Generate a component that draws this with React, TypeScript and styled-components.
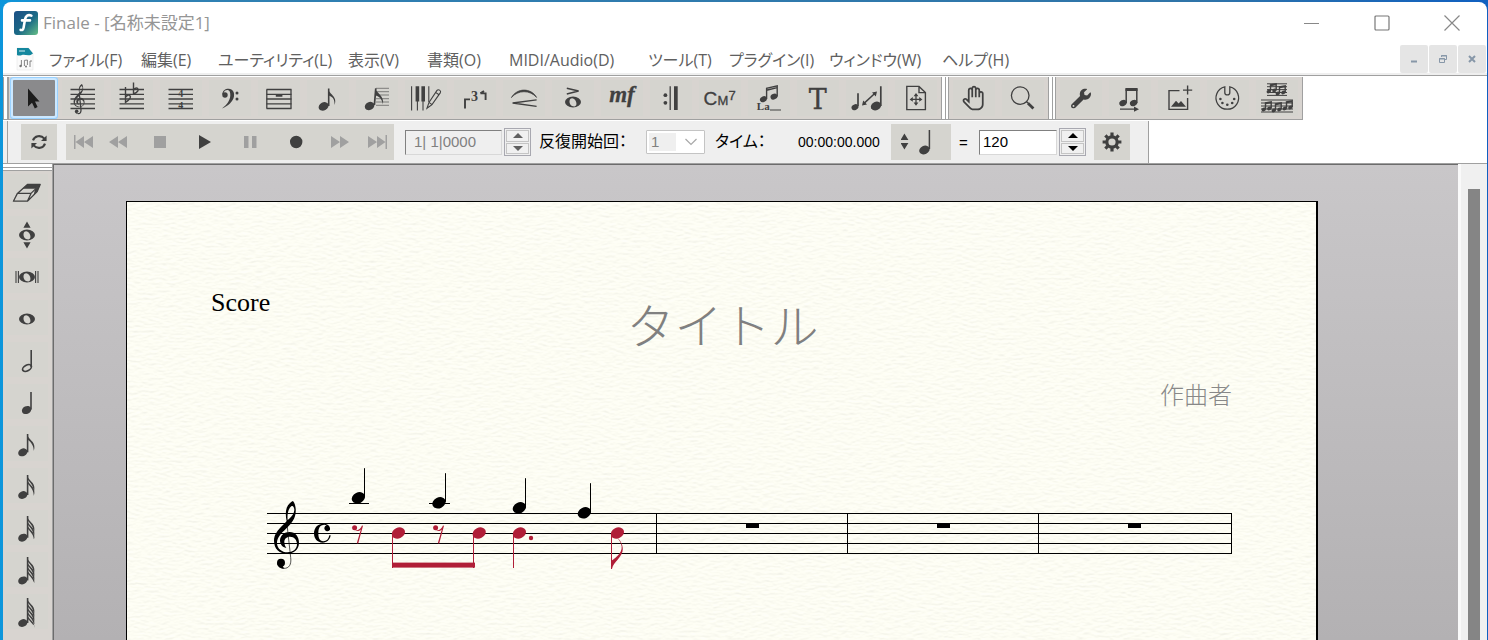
import React from "react";
import styled, { createGlobalStyle } from "styled-components";
import { LiaHandPaper } from "react-icons/lia";
import { FaWrench } from "react-icons/fa";

const ink = "#404040";
const line = "#a0a0a0";
const face = "#efefef";
const tile = "#d5d4cf";
const strip = "#d8d4d0";
const red = "#b01e37";

const ui = `"Open Sans", "Noto Sans CJK JP", sans-serif`;
const gothic = `"Liberation Sans", "Noto Sans CJK JP", sans-serif`;
const mincho = `"Liberation Serif", "Noto Sans CJK JP", serif`;

const Global = createGlobalStyle`
  * { box-sizing: border-box; }
  body {
    margin: 0;
    font-family: ${ui};
    background: linear-gradient(to right, #0c96dc 0, #2f82b4 120px, #2f74a8 80%, #1060c0 100%);
  }
  button, input, select { font: inherit; margin: 0; }
`;

/* ---------- window frame ---------- */

const Window = styled.div`
  display: flex;
  flex-direction: column;
  min-height: calc(100vh - 2px);
  margin: 0 1px 0 3px;
  border-radius: 8px 8px 0 0;
  background: #fff;
  overflow: hidden;
`;

const Desktop = styled.div`
  padding-top: 2px;
`;

const TitleBar = styled.header`
  display: flex;
  align-items: center;
  height: 43px;
  padding: 0 0 2px 11px;
`;

const Title = styled.h1`
  flex: 1;
  margin: 0 0 0 5px;
  font-size: 17px;
  line-height: 24px;
  font-weight: 400;
  color: #959595;
`;

const CaptionButton = styled.button`
  display: grid;
  place-items: center;
  width: 70px;
  height: 40px;
  padding: 0;
  border: 0;
  background: none;
`;

const MenuBar = styled.nav`
  display: flex;
  align-items: center;
  height: 30px;
  padding-left: 13px;
  border-bottom: 2px solid ${face};
`;

const MenuItem = styled.button<{ $w: number }>`
  flex: none;
  width: ${(p) => p.$w}px;
  padding: 2px 0 0;
  border: 0;
  background: none;
  text-align: left;
  white-space: nowrap;
  font-size: 16px;
  line-height: 24px;
  font-feature-settings: "palt";
  color: #606060;
`;

const MenuList = styled.div`
  display: flex;
  flex: 1;
  padding-left: 15px;
`;

const ChildButtons = styled.div`
  display: flex;
  gap: 1px;
  padding-right: 1px;
`;

const ChildButton = styled.button`
  display: grid;
  place-items: center;
  width: 28px;
  height: 28px;
  padding: 0;
  border: 0;
  border-radius: 2px;
  background: #e5e5e5;
`;

/* ---------- tool strips ---------- */

const ToolStrip = styled.div`
  display: flex;
  height: 46px;
  padding-top: 1px;
  border-top: 1px solid ${line};
`;

const Section = styled.div`
  display: flex;
  height: 43px;
  border-bottom: 1px solid ${line};
  background: ${strip};

  &:last-child {
    border-right: 1px solid ${line};
  }
`;

const Grip = styled.span<{ $narrow?: boolean }>`
  width: ${(p) => (p.$narrow ? 6 : 8)}px;
  border: solid ${line};
  border-width: 0 1px;
  background: linear-gradient(to right, #fff 3px, ${line} 3px, ${line} 4px, #fff 4px);
`;

const Tools = styled.div`
  display: flex;
  align-items: center;
  gap: 7px;
  padding: 0 4px;
`;

const ToolButton = styled.button<{ $on?: boolean }>`
  display: grid;
  place-items: center;
  width: 42px;
  height: 36px;
  padding: 0;
  border: 0;
  color: ${ink};
  background: ${(p) => (p.$on ? "#8a8a8c" : tile)};
  box-shadow: ${(p) => (p.$on ? "0 0 0 2px #cce8ff, 0 0 0 3px #99d1ff" : "none")};
  border-radius: ${(p) => (p.$on ? 1 : 0)}px;
`;

const Transport = styled.form`
  display: flex;
  align-self: flex-start;
  align-items: center;
  height: 42px;
  padding: 0 18px 0 13px;
  margin-left: 4px;
  border: solid ${line};
  border-width: 0 1px;
  background: ${face};
  box-shadow: -4px 0 0 ${face};
  font-family: ${gothic};
  font-size: 15px;
  color: #000;
`;

const TransportKey = styled.button<{ $w?: number; $dim?: boolean }>`
  display: grid;
  place-items: center;
  width: ${(p) => p.$w ?? 36}px;
  height: 36px;
  padding: 0;
  border: 0;
  background: ${tile};
  color: ${(p) => (p.$dim ? "#a0a0a0" : ink)};
`;

const Deck = styled.div`
  display: flex;
  margin: 0 11px 0 9px;
`;

const NumberBox = styled.input<{ $w: number; $dim?: boolean }>`
  width: ${(p) => p.$w}px;
  height: 25px;
  padding: 0 0 2px ${(p) => (p.$dim ? 8 : 3)}px;
  border: 1px solid;
  border-color: #808080 #d8d8d8 #d8d8d8 #808080;
  background: ${(p) => (p.$dim ? face : "#fff")};
  color: ${(p) => (p.$dim ? "#808080" : "#000")};
  outline: 0;
`;

const Spin = styled.span`
  display: flex;
  flex-direction: column;
  gap: 1px;
  width: 27px;
  height: 28px;
  margin: 0 8px 0 2px;
  padding: 1px;
  border: 1px solid #a8a8b0;
`;

const SpinKey = styled.button<{ $down?: boolean; $dim?: boolean }>`
  display: grid;
  place-items: center;
  flex: 1;
  padding: 0;
  border: 1px solid #c4c4c4;
  background: #f0f0f0;

  &::before {
    content: "";
    border: 5px solid transparent;
    border-width: ${(p) => (p.$down ? "5px 5px 0" : "0 5px 5px")};
    border-${(p) => (p.$down ? "top" : "bottom")}-color: ${(p) => (p.$dim ? "#606060" : "#000")};
  }
`;

const FieldLabel = styled.label<{ $w: number }>`
  width: ${(p) => p.$w}px;
  font-size: 16px;
  line-height: 24px;
  white-space: nowrap;
  font-feature-settings: "palt";
`;

const PassSelect = styled.select`
  width: 59px;
  height: 24px;
  padding: 0 0 2px 4px;
  appearance: none;
  border: 1px solid #c4c4c4;
  border-radius: 1px;
  color: #808080;
  background: linear-gradient(${face}, ${face}) 2px 2px / 27px 18px no-repeat, #fff;
`;

const PassArrow = styled.svg`
  pointer-events: none;
  margin: 0 12px 0 -26px;
`;

const Clock = styled.output`
  width: 93px;
  font-size: 14px;
`;

const Equals = styled.span`
  width: 28px;
  padding-left: 8px;
`;

/* ---------- work area ---------- */

const Work = styled.main`
  display: flex;
  flex: 1;
  border-top: 1px solid ${line};
`;

const Palette = styled.aside`
  display: flex;
  flex-direction: column;
  width: 50px;
  border-right: 1px solid ${line};
  background: ${strip};
`;

const PaletteGrip = styled.span`
  height: 7px;
  border: solid ${line};
  border-width: 0 0 1px;
  background: linear-gradient(#fff 3px, ${line} 3px, ${line} 4px, #fff 4px);
`;

const PaletteTools = styled.div`
  display: flex;
  flex-direction: column;
  gap: 7px;
  padding: 3px 0 0 3px;
`;

const NoteButton = styled(ToolButton)`
  height: 35px;
`;

const Canvas = styled.section`
  display: flex;
  flex: 1;
  min-width: 0;
  padding: 36px 140px 0 72px;
  border-top: 1px solid #6c6c6c;
  border-left: 1px solid #6c6c6c;
  background: linear-gradient(#c9c7c9, #b3b1b3);
`;

const Sheet = styled.article`
  display: grid;
  flex: 1;
  min-width: 0;
  border: solid #000;
  border-width: 1px 2px 0 1px;
  background: #fefef5;
  font-family: ${mincho};

  > * {
    grid-area: 1 / 1;
    min-width: 0;
  }
`;

const Paper = styled.svg`
  width: 100%;
  height: 100%;
`;

const SheetBody = styled.div`
  display: flex;
  flex-direction: column;
  z-index: 1;
  padding: 86px 84px 0;
`;

const PartName = styled.p`
  margin: 0;
  font-size: 26px;
  line-height: 30px;
  color: #000;
`;

const PieceTitle = styled.h2`
  margin: -18px 0 0 2px;
  text-align: center;
  font-size: 48px;
  line-height: 56px;
  font-weight: 300;
  color: #808080;
`;

const Composer = styled.p`
  margin: 23px 0 0;
  text-align: right;
  font-size: 24px;
  line-height: 34px;
  font-weight: 300;
  color: #888;
`;

const Staff = styled.svg`
  align-self: flex-end;
  flex: none;
  margin-top: 47px;
`;

const ScrollTrack = styled.div`
  display: flex;
  justify-content: center;
  width: 29px;
  padding: 25px 3px 0 3px;
  border-left: 3px solid #fafafa;
  background: #f0f0f0;
`;

const ScrollThumb = styled.span`
  width: 12px;
  background: #858585;
`;

/* ---------- music drawings ---------- */

const Clef = ({ transform, thin = 3 }: { transform: string; thin?: number }) => (
  <g transform={transform} fill="currentColor">
    <path
      fillRule="evenodd"
      d="M129 153C137 162 139 180 136 194C132 212 120 224 108 236C94 249 81 262 81 279C81 296 96 307 112 307C128 307 141 298 141 283C141 270 133 260 120 260C109 260 103 267 103 276C103 284 106 289 109 294C96 292 90 282 90 271C91 256 103 246 119 246C136 246 147 260 147 278C147 298 132 311 110 311C88 311 72 296 72 272C72 254 84 240 98 226L110 214C106 196 106 178 114 166C119 159 125 154 129 153ZM113 210C124 202 133 192 133 178C132 170 128 166 124 169C115 176 111 192 113 210Z"
    />
    <path d="M110 214L122 322C125 344 117 356 101 355" fill="none" stroke="currentColor" strokeWidth={thin} />
    <circle cx="93" cy="338" r="12" />
    <path d="M81 338C82 350 91 357 103 356L98 348Z" />
  </g>
);

const Head = ({ x, y, r = 5 }: { x: number; y: number; r?: number }) => (
  <ellipse cx={x} cy={y} rx={r} ry={r * 0.78} transform={`rotate(-26 ${x} ${y})`} fill="currentColor" />
);

const Lines = ({ x1, x2, ys, w = 1.3 }: { x1: number; x2: number; ys: number[]; w?: number }) => (
  <path d={ys.map((y) => `M${x1} ${y}H${x2}`).join("")} stroke="currentColor" strokeWidth={w} fill="none" />
);

const WholeNote = ({ x, y }: { x: number; y: number }) => (
  <path
    fillRule="evenodd"
    fill="currentColor"
    d={`M${x - 8} ${y}a8 5.4 0 1 0 16 0a8 5.4 0 1 0 -16 0ZM${x - 3.4} ${y - 1.6}c.8 -3.4 4.6 -2.6 6 .4c1.4 3 1.2 5.4 -1.4 5.6c-3 0 -5.2 -3 -4.6 -6Z`}
  />
);

const FlaggedNote = ({ flags }: { flags: number }) => {
  const top = Math.max(3.6, 9 - flags);
  const base = Math.min(29, 25.6 + flags * 0.7);
  return (
    <>
      <Head x={16.8} y={base} r={4.8} />
      <path d={`M21.6 ${top}V${base}`} stroke="currentColor" strokeWidth="1.6" />
      {Array.from({ length: flags }, (_, i) => {
        const y = top + i * 4;
        return (
          <path
            key={i}
            fill="currentColor"
            d={`M21 ${y}C22.5 ${y + 6} 29 ${y + 7} 28.4 ${y + 14}L27.8 ${Math.min(y + 17, base + 1.5)}C27.6 ${y + 12} 26 ${y + 9} 21 ${y + 6 - Math.min(2, flags)}Z`}
          />
        );
      })}
    </>
  );
};

const Gear = () => (
  <svg width="20" height="20" viewBox="-10 -10 20 20" fill="none" stroke="currentColor" aria-hidden="true">
    <circle r="5.2" strokeWidth="3.2" />
    {[0, 45, 90, 135, 180, 225, 270, 315].map((a) => (
      <path key={a} d="M0 -6V-9.4" strokeWidth="3.2" transform={`rotate(${a})`} />
    ))}
  </svg>
);

const Icon = ({ children, h = 36 }: { children: React.ReactNode; h?: number }) => (
  <svg width="42" height={h} viewBox={`0 0 42 ${h}`} fill="none" aria-hidden="true">
    {children}
  </svg>
);

const five = [9.5, 14.3, 19, 23.8, 28.5];
const stroke = { stroke: "currentColor", fill: "none" } as const;
const serifBold = { fontFamily: "Liberation Serif", fontWeight: 700, fill: "currentColor" } as const;

const mainTools: [string, React.ReactNode][] = [
  ["選択ツール", <path d="M15 8.5V26.5L19 22.8L21.8 28.4L24.6 27L22 21.5H26.5Z" fill="#1c1c1c" />],
  ["五線ツール", <><Lines x1={8.5} x2={33} ys={five} /><Clef transform="translate(1 -18.5) scale(.147)" thin={9} /></>],
  ["調号ツール", <><Lines x1={8.5} x2={33} ys={five} /><path d="M14.5 7V22.4C19 19.4 20.4 17 18.8 15.4C17.4 14.4 15.6 15.6 14.5 17.2M22.5 2.4V14C27 12 28 10 26.6 8.4C25 7.4 23.6 8.6 22.5 10" {...stroke} strokeWidth="1.4" /></>],
  ["拍子ツール", <><Lines x1={8.5} x2={33} ys={five} /><text x="20.7" y="17" fontSize="10" textAnchor="middle" {...serifBold}>4</text><text x="20.7" y="29" fontSize="10" textAnchor="middle" {...serifBold}>4</text></>],
  ["音部記号ツール", <><circle cx="16" cy="15" r="2.7" fill="currentColor" /><path d="M13.3 15C13 10.5 17 8.6 19.6 8.8C24 9.2 25.6 12.4 25 16.2C24.2 21.6 19 26 13 28.4C17.6 25 21 21 21.3 15.6C21.4 12 20.6 10.2 18.6 10.1C16.6 10 14.8 11.2 14.6 13.4Z" fill="currentColor" /><circle cx="28" cy="13" r="1.5" fill="currentColor" /><circle cx="28" cy="19" r="1.5" fill="currentColor" /></>],
  ["小節ツール", <><Lines x1={8.5} x2={33.5} ys={five} /><path d="M8.8 9.5V28.5M33 9.5V28.5" {...stroke} strokeWidth="1.3" /><path d="M17.8 14H24.4V16.8H17.8Z" fill="currentColor" /></>],
  ["高速ステップ入力ツール", <><Head x={16.6} y={26.4} r={5.2} /><path d="M21.7 8.6V26" {...stroke} strokeWidth="1.6" /><path d="M21 8.5C22 14.5 31 16 27.6 25C27.6 19 26 16.6 21.4 15.4Z" fill="currentColor" /></>],
  ["ステップ入力ツール", <><Lines x1={20} x2={33} ys={[8.3, 11.7, 15, 18.7, 22, 25.3]} w={0.6} /><Head x={13.6} y={26} r={5} /><path d="M18.4 25L19.8 8.4" {...stroke} strokeWidth="1.7" /><path d="M19.4 8.4C20.4 13 28.6 15.6 27 24.4C26 19 23.4 16.4 19.2 15.2Z" fill="currentColor" /></>],
  ["ハイパースクライブツール", <><path d="M6.6 6.3V30.4M12.4 20V30.4M18 20V30.4M23.8 6.3V22" {...stroke} strokeWidth="1.1" /><path d="M10.6 6.3H14.2V21.5H10.6ZM16.4 6.3H20V21.5H16.4Z" fill="currentColor" /><path d="M22 28.3L24 22.4L32 10.4C33.4 8.8 36.4 10.6 35.4 12.6L27 24.6ZM30.6 12.4L34 14.8M24 22.4L27 24.6" {...stroke} strokeWidth="1.1" /></>],
  ["連符ツール", <><path d="M11 28.4V19.4H16M26.4 13.4H31.6V20M26.4 13.4L30 11" {...stroke} strokeWidth="1.9" /><text x="20.6" y="21" fontSize="14" textAnchor="middle" {...serifBold}>3</text></>],
  ["変形図形ツール", <><path d="M8.4 17.6C14 7.6 28 7.6 33.6 17.4C27 9.8 15 9.8 8.4 17.6Z" fill="currentColor" stroke="currentColor" strokeWidth=".7" /><path d="M33.6 19.8L9.6 23L33.6 26.4" {...stroke} strokeWidth="1.3" /></>],
  ["アーティキュレーションツール", <><path d="M14.8 8.2L26.6 11.1L14.8 14" {...stroke} strokeWidth="1.5" /><WholeNote x={21} y={22} /></>],
  ["発想記号ツール", <text x="21" y="22.4" fontSize="23" textAnchor="middle" fontStyle="italic" stroke="currentColor" strokeWidth=".3" {...serifBold}>mf</text>],
  ["反復記号ツール", <><circle cx="15.4" cy="15.2" r="1.9" fill="currentColor" /><circle cx="15.4" cy="22.8" r="1.9" fill="currentColor" /><path d="M20.2 6.3V30" {...stroke} strokeWidth="1.3" /><path d="M24 6.3H27.7V30H24Z" fill="currentColor" /></>],
  ["コードネームツール", <g fontFamily="Liberation Sans" fill="currentColor" stroke="currentColor" strokeWidth=".3"><text x="4.6" y="25" fontSize="19">C</text><text x="18.4" y="25" fontSize="13">M</text><text x="29.4" y="20" fontSize="13">7</text></g>],
  ["歌詞ツール", <><Head x={15.4} y={19.2} r={3.6} /><Head x={26} y={16.6} r={3.6} /><path d="M18.6 19V8.4L29.2 5.8V16.4M18.6 10.2L29.2 7.6" {...stroke} strokeWidth="1.4" /><text x="8.8" y="30.4" fontSize="11" {...serifBold}>La</text><path d="M22 30H33" {...stroke} strokeWidth="1.2" /></>],
  ["文字ツール", <text x="20.8" y="28.7" fontSize="27" textAnchor="middle" fontFamily="DejaVu Serif" fill="currentColor" stroke="currentColor" strokeWidth=".3">T</text>],
  ["サイズツール", <><Head x={9} y={27.2} r={3.6} /><path d="M12 26V13.3M34.8 26V6.3" {...stroke} strokeWidth="1.7" /><Head x={30} y={26} r={5.4} /><path d="M18 23.4L29 13.2" {...stroke} strokeWidth="1.5" /><path d="M16 25.4L17.2 20.4L21 24.4ZM31 11.4L26 12.4L29.8 16.4Z" fill="currentColor" /></>],
  ["ページレイアウトツール", <><path d="M11.8 6.4H24L30.4 12.6V29.6H11.8ZM24 6.4V12.6H30.4" {...stroke} strokeWidth="1.4" /><path d="M21 14.5V24.3M16 19.4H26" {...stroke} strokeWidth="1.3" /><path d="M21 13L23.4 16.2H18.6ZM21 25.8L23.4 22.6H18.6ZM14.6 19.4L17.8 17V21.8ZM27.4 19.4L24.2 17V21.8Z" fill="currentColor" /></>],
];

const viewTools: [string, React.ReactNode][] = [
  ["移動ツール", <LiaHandPaper x={7} y={4} size={28} />],
  ["ズームツール", <><circle cx="18.2" cy="15.6" r="8.8" {...stroke} strokeWidth="1.3" /><path d="M24.6 21.8L26.6 23.6" {...stroke} strokeWidth="1.4" /><path d="M26 23.2L31.4 28.4" {...stroke} strokeWidth="2.8" /></>],
];

const MiniNotes = ({ x, y }: { x: number; y: number }) => (
  <g transform={`translate(${x} ${y})`}>
    <Head x={1.8} y={8.4} r={2.3} />
    <Head x={7.4} y={7.4} r={2.3} />
    <path d="M3.5 8V1.8L9.2 .8V7M3.5 2.6L9.2 1.6" {...stroke} strokeWidth="1.4" />
  </g>
);

const extraTools: [string, React.ReactNode][] = [
  ["特殊ツール", <FaWrench x={11} y={8.5} size={20} />],
  ["音符移動ツール", <><Head x={14} y={23} r={3.8} /><Head x={24.6} y={23} r={3.8} /><path d="M17.2 23V8.6M27.8 23V8.6" {...stroke} strokeWidth="1.5" /><path d="M16.5 8H28.5V11H16.5Z" fill="currentColor" /><path d="M11 29.2H26" {...stroke} strokeWidth="1.3" /><path d="M25 26.6L30 29.2L25 31.8Z" fill="currentColor" /></>],
  ["図形ツール", <><path d="M21.5 10.6H11V29.4H29.6V18" {...stroke} strokeWidth="1.4" /><path d="M29.6 5.6V14.6M25 10.1H34.2" {...stroke} strokeWidth="1.4" /><path d="M13 26.8L18 20.8L20.6 23.6L23 21L28 26.8Z" fill="currentColor" /></>],
  ["MIDIツール", <><path d="M17.8 6.9A11.3 11.3 0 1 0 22.8 6.9V12.4A2.5 2.5 0 0 1 17.8 12.4Z" {...stroke} strokeWidth="1.3" />{[[13.4, 19], [15.4, 23], [20.3, 24.7], [25.2, 23], [27.2, 19]].map(([x, y]) => <circle key={x} cx={x} cy={y} r="1.3" fill="currentColor" />)}</>],
  ["ミラーツール", <><Lines x1={11} x2={31} ys={[3.8, 6.7, 9.6, 12.5, 15.4]} w={1} /><Lines x1={5} x2={37} ys={[20, 23, 26, 29, 32]} w={1} /><MiniNotes x={11} y={3} /><MiniNotes x={20} y={5} /><MiniNotes x={6} y={21} /><MiniNotes x={16} y={22} /><MiniNotes x={27} y={20} /></>],
];

const noteTools: [string, React.ReactNode][] = [
  ["消しゴム", <><path d="M7.4 27.2L11.4 19.4L21.4 10.4H34.2L31.2 17.6L21.4 27.2ZM11.4 19.4H25L21.4 27.2M25 19.4L34.2 10.4" {...stroke} strokeWidth="1.3" strokeLinejoin="round" /><path d="M21.4 10.4H34.2L29.4 14.8H16.4ZM29 15.6L34.2 10.4L31.2 17.6L27.6 21Z" fill="currentColor" /></>],
  ["音高変更", <><path d="M21 5.6L24.6 11.8H17.4ZM21 32.4L24.6 26.2H17.4Z" fill="currentColor" /><WholeNote x={21} y={19} /></>],
  ["倍全音符", <><path d="M10 13V25M12.4 13V25M29.6 13V25M32 13V25" {...stroke} strokeWidth="1.1" /><WholeNote x={21} y={19} /></>],
  ["全音符", <WholeNote x={21} y={19} />],
  ["2分音符", <><ellipse cx="21" cy="26" rx="4.8" ry="2.8" transform="rotate(-28 21 26)" {...stroke} strokeWidth="1.7" /><path d="M25.2 8V25" {...stroke} strokeWidth="1.6" /></>],
  ["4分音符", <><Head x={20.6} y={26} r={4.9} /><path d="M25 8V25.4" {...stroke} strokeWidth="1.6" /></>],
  ...["8分音符", "16分音符", "32分音符", "64分音符", "128分音符"].map(
    (name, i) => [name, <FlaggedNote flags={i + 1} />] as [string, React.ReactNode]
  ),
];

const menus: [string, number][] = [
  ["ファイル(F)", 92],
  ["編集(E)", 77],
  ["ユーティリティ(L)", 130],
  ["表示(V)", 79],
  ["書類(O)", 82],
  ["MIDI/Audio(D)", 139],
  ["ツール(T)", 81],
  ["プラグイン(I)", 100],
  ["ウィンドウ(W)", 113],
  ["ヘルプ(H)", 80],
];

const deck: [string, number, boolean, string][] = [
  ["先頭へ", 35, true, "M0 1H1.5V15H0ZM10 2V14L1.5 8ZM19 2V14L10 8Z"],
  ["巻き戻し", 36, true, "M9 2V14L0 8ZM18 2V14L9 8Z"],
  ["停止", 45, true, "M4 2H16V14H4Z"],
  ["再生", 45, false, "M4 1L16 8L4 15Z"],
  ["一時停止", 45, true, "M4 2H8.5V14H4ZM12 2H16.5V14H12Z"],
  ["録音", 45, false, "M5 8a6.2 6.2 0 1 0 12.4 0a6.2 6.2 0 1 0 -12.4 0Z"],
  ["早送り", 44, true, "M2 2L11 8L2 14ZM11 2L20 8L11 14Z"],
  ["最後へ", 33, true, "M0 2L9 8L0 14ZM9 2L17.5 8L9 14ZM17.5 1H19V15H17.5Z"],
];

const ToolSet = ({ items, selected }: { items: [string, React.ReactNode][]; selected?: number }) => (
  <Tools>
    {items.map(([name, art], i) => (
      <ToolButton key={name} type="button" aria-label={name} $on={i === selected}>
        <Icon>{art}</Icon>
      </ToolButton>
    ))}
  </Tools>
);

const RestEighth = ({ x }: { x: number }) => (
  <g transform={`translate(${x} 525)`} fill="currentColor">
    <circle cx="2.6" cy="2.8" r="2.5" />
    <path d="M2.6 5.2C6 6 8.6 4 10 .6L11 .8L6.2 18.6L4.8 18.2L8.8 4.6C7 6.4 4.6 6.6 2.6 5.2Z" />
  </g>
);

const quarterNotes = [[358.4, 497.8], [439, 502.8], [519.4, 507.8], [584.4, 512.8]];

const Music = () => (
  <Staff width="966" height="120" viewBox="266 460 966 120" role="img" aria-label="五線譜" color="#000">
    <Lines x1={267} x2={1232} ys={[513.5, 523.5, 533.5, 543.5, 553.5]} w={1} />
    <path d="M656.5 513V554M847.5 513V554M1038.5 513V554M1231.5 513V554M349 503.5H369M429 503.5H450" stroke="#000" />
    <Clef transform="translate(250 450) scale(.3333)" thin={2} />
    <path transform="translate(250 450) scale(.3333)" d="M242 256C240 270 230 278 218 278C202 278 192 266 192 250C192 232 204 221 220 221C234 221 242 229 240 239A9 9 0 1 1 230 226C227 225 224 224 220 225C209 226 205 236 205 250C205 262 208 274 220 274C230 274 236 268 238 256Z" />
    {quarterNotes.map(([x, y]) => (
      <g key={x}>
        <Head x={x} y={y} r={6.9} />
        <path d={`M${Math.floor(x) + 6.5} ${y - 1}V${y - 29.6}`} stroke="#000" />
      </g>
    ))}
    {[746, 937, 1128].map((x) => <rect key={x} x={x} y="523" width="13" height="5" />)}
    <g color={red}>
      <RestEighth x={352} />
      <RestEighth x={433} />
      {[398.4, 479.2, 519.4, 617.4].map((x) => (
        <g key={x}>
          <Head x={x} y={533} r={6.9} />
          <path d={`M${Math.round(x) - 5.5} 535V568`} stroke={red} />
        </g>
      ))}
      <rect x="392" y="562.6" width="83" height="5" fill={red} />
      <circle cx="531" cy="538" r="2.2" fill={red} />
      <path d="M611 569V561C617 557 624 551 621 544C620 541 618 539 617 537.6C620 540 622.6 544 622.8 549C623 557 613 562 612 569Z" fill={red} />
    </g>
  </Staff>
);

export default function App() {
  return (
    <Desktop>
      <Global />
      <Window>
        <TitleBar>
          <svg width="24" height="24" viewBox="0 0 24 24" aria-hidden="true">
            <defs>
              <linearGradient id="brand" x1="0" y1="0" x2="1" y2="1">
                <stop offset="0" stopColor="#1c4f86" />
                <stop offset=".55" stopColor="#1b6a86" />
                <stop offset="1" stopColor="#67bf86" />
              </linearGradient>
            </defs>
            <rect width="24" height="24" rx="3" fill="url(#brand)" />
            <path d="M17.4 4.6C13.6 3 11.6 5.4 11 8.6L9.6 16.6C9.2 18.8 8.4 19.4 6.6 18.9M8 9.4H16" fill="none" stroke="#fff" strokeWidth="2.6" strokeLinecap="round" />
          </svg>
          <Title>Finale - [名称未設定1]</Title>
          <CaptionButton aria-label="最小化">
            <svg width="16" height="16"><path d="M0 8.5H15" stroke="#888" /></svg>
          </CaptionButton>
          <CaptionButton aria-label="最大化">
            <svg width="16" height="16"><rect x="1" y="1" width="14" height="14" rx="1" fill="none" stroke="#777" strokeWidth="1.2" /></svg>
          </CaptionButton>
          <CaptionButton aria-label="閉じる">
            <svg width="16" height="16"><path d="M.5 .5L15.5 15.5M15.5 .5L.5 15.5" stroke="#888" strokeWidth="1.2" /></svg>
          </CaptionButton>
        </TitleBar>

        <MenuBar>
          <svg width="18" height="24" viewBox="0 0 18 24" aria-hidden="true">
            <path d="M1 1H12.5L17 6V23H1Z" fill="#fafafa" stroke="#e8e8e8" strokeWidth=".6" />
            <path d="M1 1H12.5L17 6.5C13 10 9 7 6 8C4 9 2 8.6 1 8Z" fill="#14879e" />
            <path d="M3 4H9" stroke="#d8f0f4" strokeWidth="1.2" />
            <path d="M5.4 19V13M8.4 19V13.4L11.4 13V18M14 20V14H16" fill="none" stroke="#777" strokeWidth=".9" />
            <circle cx="4.6" cy="19" r="1.2" fill="#777" />
            <circle cx="10" cy="19.6" r="1" fill="#777" />
          </svg>
          <MenuList>
            {menus.map(([name, w]) => <MenuItem key={name} $w={w}>{name}</MenuItem>)}
          </MenuList>
          <ChildButtons>
            <ChildButton aria-label="文書を最小化">
              <svg width="10" height="10"><path d="M2 7.5H8" stroke="#8797a8" strokeWidth="2" /></svg>
            </ChildButton>
            <ChildButton aria-label="文書を元に戻す">
              <svg width="10" height="10"><path d="M1.5 4.5H6.5V8.5H1.5ZM1 5H7M3.5 3V1.5H8.5V5.5H7M3 2H9" fill="none" stroke="#8797a8" /></svg>
            </ChildButton>
            <ChildButton aria-label="文書を閉じる">
              <svg width="10" height="10"><path d="M2 2L8 8M8 2L2 8" stroke="#8797a8" strokeWidth="2" /></svg>
            </ChildButton>
          </ChildButtons>
        </MenuBar>

        <ToolStrip>
          <Section><Grip $narrow /><ToolSet items={mainTools} selected={0} /></Section>
          <Section><Grip /><ToolSet items={viewTools} /></Section>
          <Section><Grip /><ToolSet items={extraTools} /></Section>
        </ToolStrip>

        <Transport onSubmit={(e) => e.preventDefault()}>
          <TransportKey type="button" aria-label="ループ">
            <svg width="18" height="18" viewBox="0 0 18 18" fill="none" stroke="currentColor" strokeWidth="2.1">
              <path d="M3 7.4C4.4 3 10.6 1.4 14.4 5.6M15 10.6C13.6 15 7.4 16.6 3.6 12.4" />
              <path d="M16.6 2.4V8H11ZM1.4 15.6V10H7Z" fill="currentColor" stroke="none" />
            </svg>
          </TransportKey>
          <Deck>
            {deck.map(([name, w, dim, d]) => (
              <TransportKey key={name} type="button" aria-label={name} $w={w} $dim={dim}>
                <svg width="22" height="16" viewBox="-1 0 22 16"><path d={d} fill="currentColor" /></svg>
              </TransportKey>
            ))}
          </Deck>
          <NumberBox $w={97} $dim aria-label="小節位置" readOnly value="1| 1|0000" />
          <Spin>
            <SpinKey type="button" aria-label="次の小節" $dim />
            <SpinKey type="button" aria-label="前の小節" $dim $down />
          </Spin>
          <FieldLabel $w={107} htmlFor="pass">反復開始回：</FieldLabel>
          <PassSelect id="pass" defaultValue="1"><option>1</option></PassSelect>
          <PassArrow width="24" height="12" viewBox="0 0 24 12" aria-hidden="true">
            <path d="M6.5 3L12 8.5L17.5 3" fill="none" stroke="#a8a8a8" strokeWidth="1.2" />
          </PassArrow>
          <FieldLabel $w={83} htmlFor="clock">タイム：</FieldLabel>
          <Clock id="clock">00:00:00.000</Clock>
          <TransportKey type="button" $w={60} aria-label="拍の単位">
            <svg width="40" height="28" viewBox="0 0 40 28" fill="currentColor">
              <path d="M3.4 5.6L7.4 12H-.4ZM3.4 21.6L7.4 15H-.4Z" />
              <g transform="translate(3 0)"><Head x={20.4} y={22} r={5.4} /><path d="M25.4 2V21" stroke="currentColor" strokeWidth="1.5" /></g>
            </svg>
          </TransportKey>
          <Equals>=</Equals>
          <NumberBox $w={78} aria-label="テンポ" defaultValue="120" />
          <Spin>
            <SpinKey type="button" aria-label="テンポを上げる" />
            <SpinKey type="button" aria-label="テンポを下げる" $down />
          </Spin>
          <TransportKey type="button" aria-label="再生設定"><Gear /></TransportKey>
        </Transport>

        <Work>
          <Palette>
            <PaletteGrip />
            <PaletteTools>
              {noteTools.map(([name, art]) => (
                <NoteButton key={name} type="button" aria-label={name}><Icon h={35}>{art}</Icon></NoteButton>
              ))}
            </PaletteTools>
          </Palette>
          <Canvas>
            <Sheet>
              <Paper aria-hidden="true">
                <filter id="grain" x="0" y="0" width="100%" height="100%" colorInterpolationFilters="sRGB">
                  <feTurbulence type="fractalNoise" baseFrequency=".14 .4" numOctaves="3" seed="4" />
                  <feDiffuseLighting lightingColor="#fdfdf2" surfaceScale=".3" diffuseConstant="1.15">
                    <feDistantLight azimuth="90" elevation="60" />
                  </feDiffuseLighting>
                </filter>
                <rect width="100%" height="100%" filter="url(#grain)" opacity=".4" />
              </Paper>
              <SheetBody>
                <PartName>Score</PartName>
                <PieceTitle>タイトル</PieceTitle>
                <Composer>作曲者</Composer>
                <Music />
              </SheetBody>
            </Sheet>
          </Canvas>
          <ScrollTrack><ScrollThumb /></ScrollTrack>
        </Work>
      </Window>
    </Desktop>
  );
}
